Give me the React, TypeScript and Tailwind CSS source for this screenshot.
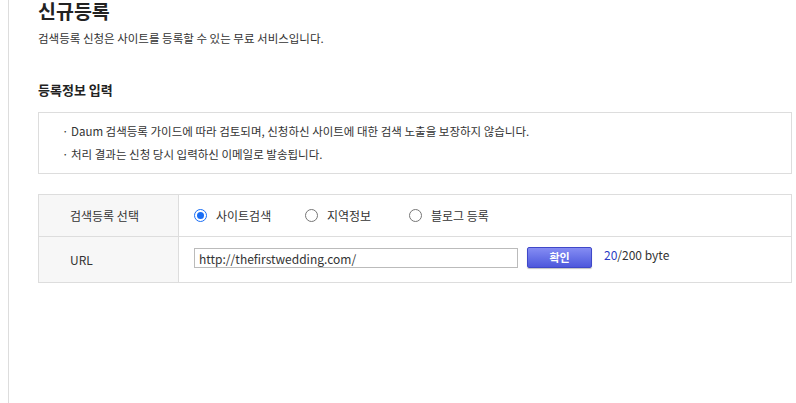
const font = { fontFamily: '"Noto Sans CJK KR", "Noto Sans", sans-serif' };

function Radio({ label, checked }: { label: string; checked?: boolean }) {
  return (
    <label className="flex items-center gap-[9px] text-[12px] text-[#333]">
      <span
        className={
          checked
            ? "w-[13px] h-[13px] rounded-full border-[1.5px] border-[#1a6ef5] flex items-center justify-center bg-white"
            : "w-[13px] h-[13px] rounded-full border border-[#767676] bg-white"
        }
      >
        {checked && <span className="w-[7px] h-[7px] rounded-full bg-[#1a6ef5]" />}
      </span>
      {label}
    </label>
  );
}

export default function App() {
  return (
    <div className="min-h-screen bg-white" style={font}>
      <div className="ml-2 min-h-screen border-l border-[#ddd] pl-[29px] pr-[4px]">
        <h1 className="text-[19.5px] font-bold leading-[22px] text-[#222]">신규등록</h1>
        <p className="mt-[8px] text-[11.5px] leading-[16px] text-[#333]">
          검색등록 신청은 사이트를 등록할 수 있는 무료 서비스입니다.
        </p>

        <h2 className="mt-[35px] text-[13px] font-bold leading-[18px] text-[#222]">등록정보 입력</h2>

        <div className="mt-[13px] border border-[#ddd] pl-[23px] pt-[7px] pb-[7px] text-[11.5px] leading-[23px] text-[#333]">
          <p>· Daum 검색등록 가이드에 따라 검토되며, 신청하신 사이트에 대한 검색 노출을 보장하지 않습니다.</p>
          <p>· 처리 결과는 신청 당시 입력하신 이메일로 발송됩니다.</p>
        </div>

        <div className="mt-[20px] border border-[#ddd]">
          <div className="flex h-[42px] border-b border-[#ddd]">
            <div className="w-[140px] shrink-0 bg-[#f7f7f7] border-r border-[#ddd] flex items-center pl-[31px] text-[12px] text-[#333]">
              검색등록 선택
            </div>
            <div className="flex items-center pl-[15px]">
              <div className="w-[111px]">
                <Radio label="사이트검색" checked />
              </div>
              <div className="w-[104px]">
                <Radio label="지역정보" />
              </div>
              <Radio label="블로그 등록" />
            </div>
          </div>
          <div className="flex h-[45px]">
            <div className="w-[140px] shrink-0 bg-[#f7f7f7] border-r border-[#ddd] flex items-center pl-[31px] text-[12px] text-[#333]">
              URL
            </div>
            <div className="flex items-start pl-[15px] pt-[11px]">
              <input
                readOnly
                value="http://thefirstwedding.com/"
                className="w-[324px] h-[20px] border border-[#bbb] px-[4px] text-[12px] text-[#333] outline-none"
                style={font}
              />
              <button className="ml-[9px] -mt-[1px] w-[65px] h-[21px] rounded-[2px] border border-[#3f48c8] bg-gradient-to-b from-[#858cf3] to-[#4e57dc] text-[11px] font-bold text-white shadow-[0_1px_1px_rgba(0,0,0,0.25)]">
                확인
              </button>
              <span className="ml-[12px] -mt-[2px] text-[12px] text-[#333]">
                <span className="text-[#2a3cc4]">20</span>/200 byte
              </span>
            </div>
          </div>
        </div>
      </div>
    </div>
  );
}
